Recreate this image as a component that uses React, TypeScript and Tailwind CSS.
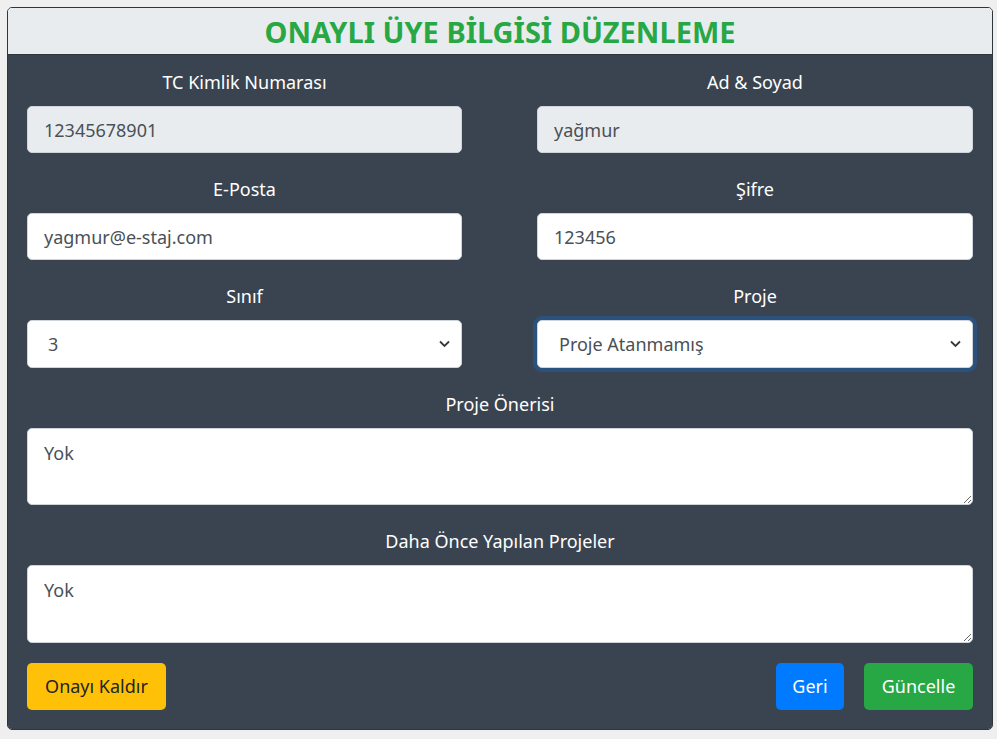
import React from "react";

const Chevron = () => (
  <svg
    className="pointer-events-none absolute right-[12px] top-1/2 -translate-y-1/2"
    width="11"
    height="7"
    viewBox="0 0 11 7"
    fill="none"
  >
    <path d="M1 1l4.5 4.5L10 1" stroke="#343a40" strokeWidth="1.8" />
  </svg>
);

const Label = ({ children }: { children: React.ReactNode }) => (
  <label className="block text-center text-white text-[18px] leading-[28px] mb-[10px]">{children}</label>
);

const inputBase =
  "block w-full h-[47px] rounded-[5px] border border-[#ced4da] px-[16px] text-[18px] text-[#495057] outline-none";

const App = () => {
  return (
    <div
      className="min-h-screen bg-[#efefef] pt-[7px] pl-[7px]"
      style={{ fontFamily: '"Noto Sans", "Open Sans", sans-serif' }}
    >
      <div className="w-[986px] rounded-[5px] border border-[#2f353b] overflow-hidden">
        <div className="h-[47px] bg-[#e9ecef] border-b border-[#2f353b] flex items-center justify-center">
          <h1 className="text-[29px] font-bold text-[#28a745] leading-none">ONAYLI ÜYE BİLGİSİ DÜZENLEME</h1>
        </div>
        <div className="bg-[#3a4450] px-[19px] pt-[13px] pb-[19px]">
          <div className="grid grid-cols-[435px_436px] gap-x-[75px] gap-y-[22px]">
            <div>
              <Label>TC Kimlik Numarası</Label>
              <input readOnly value="12345678901" className={inputBase + " bg-[#e9ecef]"} />
            </div>
            <div>
              <Label>Ad &amp; Soyad</Label>
              <input readOnly value="yağmur" className={inputBase + " bg-[#e9ecef]"} />
            </div>
            <div>
              <Label>E-Posta</Label>
              <input readOnly value="yagmur@e-staj.com" className={inputBase + " bg-white"} />
            </div>
            <div>
              <Label>Şifre</Label>
              <input readOnly value="123456" className={inputBase + " bg-white"} />
            </div>
            <div>
              <Label>Sınıf</Label>
              <div className="relative">
                <select
                  defaultValue="3"
                  className={inputBase + " bg-white appearance-none pl-[20px] h-[48px]"}
                >
                  <option value="1">1</option>
                  <option value="2">2</option>
                  <option value="3">3</option>
                  <option value="4">4</option>
                </select>
                <Chevron />
              </div>
            </div>
            <div>
              <Label>Proje</Label>
              <div className="relative">
                <select
                  defaultValue="0"
                  className={
                    inputBase +
                    " bg-white appearance-none pl-[21px] h-[48px] border-[#80bdff] shadow-[0_0_0_4px_rgba(0,123,255,0.25)]"
                  }
                >
                  <option value="0">Proje Atanmamış</option>
                </select>
                <Chevron />
              </div>
            </div>
            <div className="col-span-2">
              <Label>Proje Önerisi</Label>
              <textarea
                readOnly
                value="Yok"
                className="block w-full h-[77px] rounded-[5px] border border-[#ced4da] bg-white px-[16px] py-[10px] text-[18px] leading-[28px] text-[#495057] outline-none"
              />
            </div>
            <div className="col-span-2">
              <Label>Daha Önce Yapılan Projeler</Label>
              <textarea
                readOnly
                value="Yok"
                className="block w-full h-[78px] rounded-[5px] border border-[#ced4da] bg-white px-[16px] py-[10px] text-[18px] leading-[28px] text-[#495057] outline-none"
              />
            </div>
          </div>
          <div className="mt-[20px] flex items-center">
            <button className="h-[47px] w-[139px] rounded-[5px] bg-[#ffc107] text-[18px] text-[#212529]">Onayı Kaldır</button>
            <div className="ml-auto flex gap-[20px]">
              <button className="h-[47px] w-[68px] rounded-[5px] bg-[#007bff] text-[18px] text-white">Geri</button>
              <button className="h-[47px] w-[109px] rounded-[5px] bg-[#28a745] text-[18px] text-white">Güncelle</button>
            </div>
          </div>
        </div>
      </div>
    </div>
  );
};

export default App;
